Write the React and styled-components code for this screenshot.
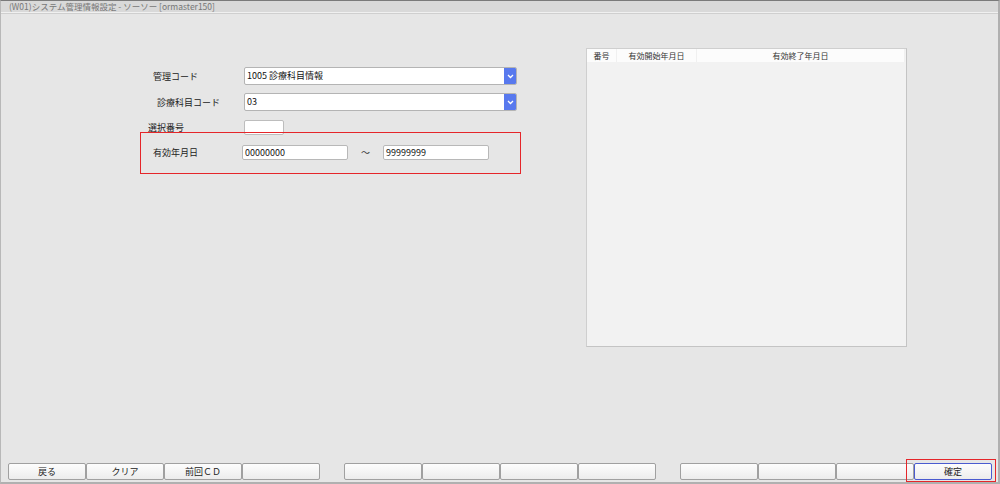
import styled, { createGlobalStyle } from "styled-components";

const GlobalStyle = createGlobalStyle`
    html, body {
        margin: 0;
        padding: 0;
        background: #e6e6e6;
    }
    * {
        box-sizing: border-box;
    }
`;

const font = `"Noto Sans CJK JP", "Liberation Sans", sans-serif`;

const formRows = [
    { label: "管理コード", indent: 13, value: "1005 診療科目情報" },
    { label: "診療科目コード", indent: 17, value: "03" },
];

const footerGroups = [
    ["戻る", "クリア", "前回ＣＤ", ""],
    ["", "", "", ""],
    ["", "", "", "確定"],
];

const Chevron = () => (
    <svg width="7" height="5" viewBox="0 0 7 5">
        <path d="M1 1 L3.5 3.5 L6 1" fill="none" stroke="#fff" strokeWidth="1.3" />
    </svg>
);

const App = () => {
    return (
        <Window>
            <GlobalStyle />
            <TitleBar>(W01)システム管理情報設定 - ソーソー [ormaster150]</TitleBar>
            <Main>
                <FormCol>
                    {formRows.map((row, i) => (
                        <SelectRow key={row.label} $first={i === 0}>
                            <Label $indent={row.indent}>{row.label}</Label>
                            <Select>
                                <SelectText>{row.value}</SelectText>
                                <Arrow><Chevron /></Arrow>
                            </Select>
                        </SelectRow>
                    ))}
                    <InputRow>
                        <Label $indent={8}>選択番号</Label>
                        <SmallInput />
                    </InputRow>
                    <RedBox>
                        <Label $indent={12} $width={101}>有効年月日</Label>
                        <DateInput>00000000</DateInput>
                        <Tilde>～</Tilde>
                        <DateInput>99999999</DateInput>
                    </RedBox>
                </FormCol>
                <TablePanel>
                    <TableHead>
                        <HeadCell $width={30}>番号</HeadCell>
                        <HeadCell $width={80}>有効開始年月日</HeadCell>
                        <HeadCell $grow>有効終了年月日</HeadCell>
                    </TableHead>
                </TablePanel>
            </Main>
            <Footer>
                {footerGroups.map((group, g) => (
                    <ButtonGroup key={g}>
                        {group.map((text, i) => (
                            <FooterButton key={i} $primary={text === "確定"}>
                                {text}
                            </FooterButton>
                        ))}
                    </ButtonGroup>
                ))}
            </Footer>
        </Window>
    );
};

const Window = styled.div`
    width: 1000px;
    height: 484px;
    display: flex;
    flex-direction: column;
    background: #e6e6e6;
    border-top: 1px solid #7a7a7a;
    border-left: 1px solid #b8b8b8;
    border-right: 2px solid #b0b0b0;
    border-bottom: 2px solid #b0b0b0;
    font-family: ${font};
    color: #222;
`;

const TitleBar = styled.div`
    height: 12px;
    line-height: 11px;
    padding-left: 8px;
    font-size: 8.5px;
    color: #777;
    background: #d9d9d9;
    border-bottom: 1px solid #f0f0f0;
    box-shadow: 0 1px 0 #cfcfcf;
    flex-shrink: 0;
`;

const Main = styled.div`
    flex: 1;
    display: flex;
    align-items: flex-start;
`;

const FormCol = styled.div`
    width: 381px;
    margin-left: 139px;
    margin-top: 54px;
    display: flex;
    flex-direction: column;
`;

const SelectRow = styled.div`
    display: flex;
    align-items: center;
    height: 18px;
    margin-top: ${(p) => (p.$first ? 0 : 8)}px;
`;

const InputRow = styled.div`
    display: flex;
    align-items: center;
    height: 15px;
    margin-top: 9px;
`;

const Label = styled.div`
    width: ${(p) => p.$width || 104}px;
    padding-left: ${(p) => p.$indent}px;
    font-size: 9px;
    color: #222;
    white-space: nowrap;
    flex-shrink: 0;
`;

const Select = styled.div`
    width: 273px;
    height: 18px;
    display: flex;
    align-items: stretch;
    background: #fff;
    border: 1px solid #b4b4b4;
    border-radius: 2px;
    overflow: hidden;
`;

const SelectText = styled.div`
    flex: 1;
    padding-left: 2px;
    font-size: 9px;
    line-height: 16px;
    color: #111;
`;

const Arrow = styled.div`
    width: 12px;
    display: flex;
    align-items: center;
    justify-content: center;
    background: #5879ee;
`;

const SmallInput = styled.div`
    width: 40px;
    height: 15px;
    background: #fff;
    border: 1px solid #bdbdbd;
    border-radius: 2px;
`;

const RedBox = styled.div`
    margin-top: -3px;
    height: 42px;
    display: flex;
    align-items: center;
    padding-bottom: 2px;
    border: 1px solid #e5262a;
`;

const DateInput = styled.div`
    width: 106px;
    height: 15px;
    padding-left: 2px;
    font-size: 9px;
    line-height: 13px;
    color: #111;
    background: #fff;
    border: 1px solid #b8b8b8;
    border-radius: 2px;
`;

const Tilde = styled.div`
    width: 35px;
    text-align: center;
    font-size: 9px;
    color: #333;
`;

const TablePanel = styled.div`
    width: 321px;
    height: 299px;
    margin-left: 65px;
    margin-top: 35px;
    background: #f2f2f2;
    border: 1px solid #cfcfcf;
    border-right-color: #c4c4c4;
    border-bottom-color: #c4c4c4;
`;

const TableHead = styled.div`
    display: flex;
    height: 13px;
    background: #fcfcfc;
    margin-right: 1px;
`;

const HeadCell = styled.div`
    ${(p) => (p.$grow ? "flex: 1;" : `width: ${p.$width}px;`)}
    font-size: 8px;
    line-height: 13px;
    text-align: center;
    color: #333;
    border-right: 1px solid #f0f0f0;
`;

const Footer = styled.div`
    display: flex;
    gap: 24px;
    padding: 0 0 2px 7px;
    flex-shrink: 0;
`;

const ButtonGroup = styled.div`
    display: flex;
`;

const FooterButton = styled.div`
    position: relative;
    width: 78px;
    height: 17px;
    font-size: 9px;
    line-height: 15px;
    text-align: center;
    color: #222;
    background: linear-gradient(#fdfdfd, #ececec);
    border: 1px solid ${(p) => (p.$primary ? "#4a5bd0" : "#a0a0a0")};
    border-radius: 2px;

    ${(p) =>
        p.$primary &&
        `
        &::after {
            content: "";
            position: absolute;
            top: -5px;
            left: -9px;
            right: -5px;
            bottom: -3px;
            border: 1px solid #e5262a;
        }
    `}
`;

export default App;
